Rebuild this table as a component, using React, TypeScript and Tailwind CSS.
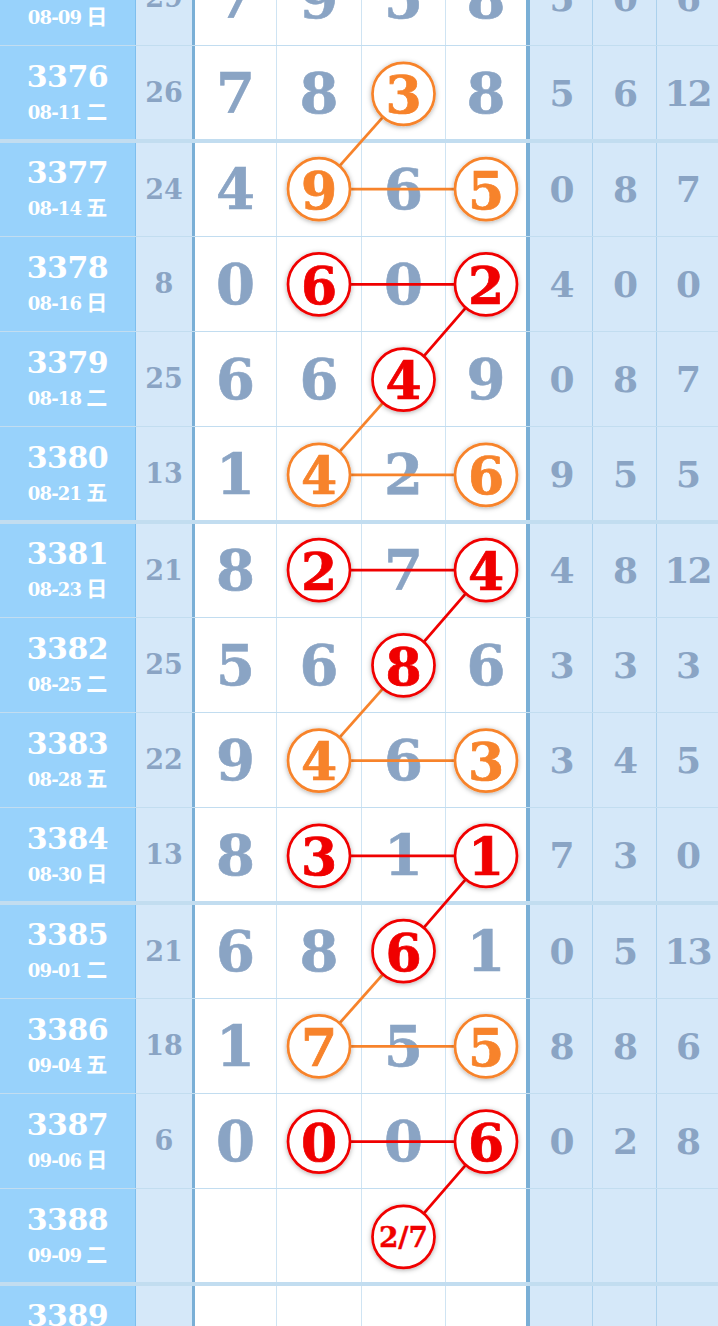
import React from 'react';

const ORANGE = '#f7832b';
const RED = '#f00000';
const ROW_H = 95.25;

// column widths incl. their right border
const COLS = [136, 59, 82, 85, 84, 84, 63, 64, 61];
// centres of the four white number columns (content box, without the border)
const NUM_X = [236, 319, 403.5, 486];

type Row = {
  issue: number;
  date: string;
  week: string;
  sum?: number;
  d: (number | null)[];
  r: (number | null)[];
};

const rows: Row[] = [
  { issue: 3375, date: '08-09', week: '日', sum: 29, d: [7, 9, 5, 8], r: [5, 0, 6] },
  { issue: 3376, date: '08-11', week: '二', sum: 26, d: [7, 8, 3, 8], r: [5, 6, 12] },
  { issue: 3377, date: '08-14', week: '五', sum: 24, d: [4, 9, 6, 5], r: [0, 8, 7] },
  { issue: 3378, date: '08-16', week: '日', sum: 8, d: [0, 6, 0, 2], r: [4, 0, 0] },
  { issue: 3379, date: '08-18', week: '二', sum: 25, d: [6, 6, 4, 9], r: [0, 8, 7] },
  { issue: 3380, date: '08-21', week: '五', sum: 13, d: [1, 4, 2, 6], r: [9, 5, 5] },
  { issue: 3381, date: '08-23', week: '日', sum: 21, d: [8, 2, 7, 4], r: [4, 8, 12] },
  { issue: 3382, date: '08-25', week: '二', sum: 25, d: [5, 6, 8, 6], r: [3, 3, 3] },
  { issue: 3383, date: '08-28', week: '五', sum: 22, d: [9, 4, 6, 3], r: [3, 4, 5] },
  { issue: 3384, date: '08-30', week: '日', sum: 13, d: [8, 3, 1, 1], r: [7, 3, 0] },
  { issue: 3385, date: '09-01', week: '二', sum: 21, d: [6, 8, 6, 1], r: [0, 5, 13] },
  { issue: 3386, date: '09-04', week: '五', sum: 18, d: [1, 7, 5, 5], r: [8, 8, 6] },
  { issue: 3387, date: '09-06', week: '日', sum: 6, d: [0, 0, 0, 6], r: [0, 2, 8] },
  { issue: 3388, date: '09-09', week: '二', d: [null, null, null, null], r: [null, null, null] },
  { issue: 3389, date: '09-11', week: '四', d: [null, null, null, null], r: [null, null, null] },
];

// [row index, column index (0-3), label, colour]
type Mark = [number, number, string, string];
const marks: Mark[] = [
  [1, 2, '3', ORANGE],
  [2, 1, '9', ORANGE], [2, 3, '5', ORANGE],
  [3, 1, '6', RED], [3, 3, '2', RED],
  [4, 2, '4', RED],
  [5, 1, '4', ORANGE], [5, 3, '6', ORANGE],
  [6, 1, '2', RED], [6, 3, '4', RED],
  [7, 2, '8', RED],
  [8, 1, '4', ORANGE], [8, 3, '3', ORANGE],
  [9, 1, '3', RED], [9, 3, '1', RED],
  [10, 2, '6', RED],
  [11, 1, '7', ORANGE], [11, 3, '5', ORANGE],
  [12, 1, '0', RED], [12, 3, '6', RED],
  [13, 2, '2/7', RED],
];

// pairs of mark indexes; line takes colour of the second one
const links: [number, number][] = [
  [0, 1], [1, 2], [3, 4], [4, 5], [5, 6], [6, 7], [8, 9], [9, 10],
  [10, 11], [11, 12], [13, 14], [14, 15], [15, 16], [16, 17], [18, 19], [19, 20],
];

const FONT = '"DejaVu Serif", "Noto Sans CJK SC", serif';
const CJK = '"Noto Sans CJK SC", sans-serif';

const hasMark = (ri: number, ci: number) => marks.some(m => m[0] === ri && m[1] === ci);
const cy = (ri: number) => ri * ROW_H + 47.6;

function Overlay() {
  const h = rows.length * ROW_H;
  return (
    <svg
      className="absolute left-0 top-0 pointer-events-none"
      width={718}
      height={h}
      viewBox={`0 0 718 ${h}`}
    >
      <defs>
        <filter id="glow" x="-40%" y="-40%" width="180%" height="180%">
          <feDropShadow dx="0" dy="1" stdDeviation="2.4" floodColor="#000" floodOpacity="0.32" />
        </filter>
      </defs>
      {links.map(([a, b], i) => {
        const A = marks[a];
        const B = marks[b];
        return (
          <line
            key={i}
            x1={NUM_X[A[1]]}
            y1={cy(A[0])}
            x2={NUM_X[B[1]]}
            y2={cy(B[0])}
            stroke={B[3]}
            strokeWidth={2.8}
          />
        );
      })}
      {marks.map(([ri, ci, label, color], i) => (
        <g key={i}>
          <circle
            cx={NUM_X[ci]}
            cy={cy(ri)}
            r={31}
            fill="#fff"
            stroke={color}
            strokeWidth={2.7}
            filter="url(#glow)"
          />
          <text
            x={NUM_X[ci]}
            y={cy(ri) + 1}
            textAnchor="middle"
            dominantBaseline="central"
            fill={color}
            stroke={color}
            strokeWidth={label.length > 1 ? 0.4 : 0.7}
            fontWeight="bold"
            fontSize={label.length > 1 ? 28 : 52}
            style={{ fontFamily: FONT }}
          >
            {label}
          </text>
        </g>
      ))}
    </svg>
  );
}

function TableRow({ row, idx }: { row: Row; idx: number }) {
  const thickBelow = (row.issue - 3376) % 4 === 0;
  const thickAbove = (row.issue - 3377) % 4 === 0;
  return (
    <div
      className={`flex h-[95.25px] border-b-[rgba(95,165,215,0.38)] ${
        thickBelow ? 'border-b-[2px]' : 'border-b'
      } ${thickAbove ? 'border-t-[2px] border-t-[rgba(95,165,215,0.38)]' : ''}`}
    >
      <div className="w-[136px] shrink-0 bg-[#98d2fb] border-r border-r-[rgba(70,150,210,0.3)] flex flex-col items-center justify-center text-white pb-[2px]">
        <div className="text-[30px] leading-none font-bold tracking-[-0.5px]">{row.issue}</div>
        <div className="flex items-baseline gap-[5px] mt-[8px] leading-none font-bold">
          <span className="text-[18px] tracking-[-0.8px]">{row.date}</span>
          <span className="text-[21px]" style={{ fontFamily: CJK }}>
            {row.week}
          </span>
        </div>
      </div>
      <div className="w-[59px] shrink-0 bg-[#d5e8f9] border-r-[3px] border-r-[#7aafd6] flex items-center justify-center text-[27px] leading-none font-bold text-[#8aa4c4]">
        {row.sum ?? ''}
      </div>
      {row.d.map((v, ci) => (
        <div
          key={ci}
          style={{ width: COLS[2 + ci] }}
          className={`shrink-0 bg-white flex items-center justify-center text-[56px] leading-none font-bold text-[#8aa4c4] [-webkit-text-stroke:0.6px_#8aa4c4] ${
            ci === 3 ? 'border-r-4 border-r-[#7aafd6]' : 'border-r border-r-[rgba(95,165,215,0.3)]'
          }`}
        >
          {v !== null && !hasMark(idx, ci) ? v : ''}
        </div>
      ))}
      {row.r.map((v, ci) => (
        <div
          key={ci}
          style={{ width: COLS[6 + ci] }}
          className={`shrink-0 bg-[#d5e8f9] flex items-center justify-center text-[36px] leading-none font-bold text-[#8aa4c4] tracking-[-2px] ${
            ci < 2 ? 'border-r border-r-[rgba(95,165,215,0.35)]' : ''
          }`}
        >
          {v ?? ''}
        </div>
      ))}
    </div>
  );
}

export default function App() {
  return (
    <div className="w-[718px] h-[1326px] overflow-hidden bg-white" style={{ fontFamily: FONT }}>
      <div className="relative -mt-[49.25px]">
        {rows.map((row, i) => (
          <TableRow key={row.issue} row={row} idx={i} />
        ))}
        <Overlay />
      </div>
    </div>
  );
}
